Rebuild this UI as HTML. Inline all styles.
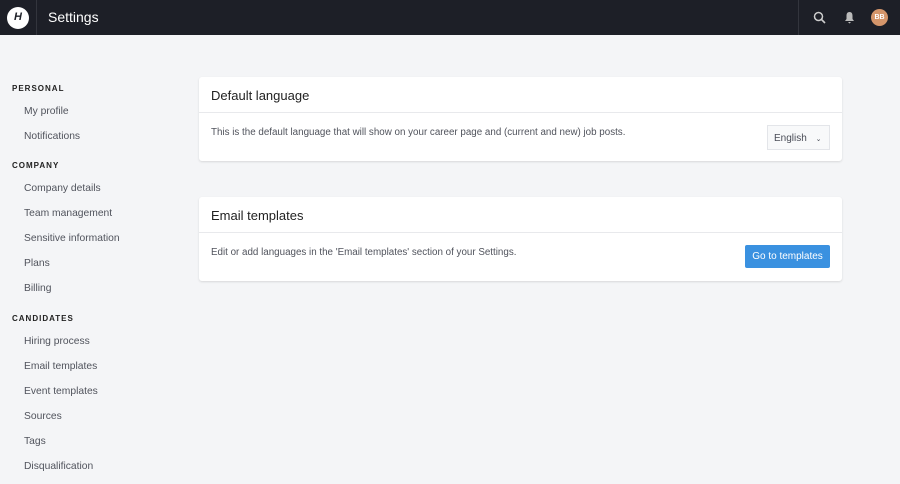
<!DOCTYPE html>
<html><head><style>
*{margin:0;padding:0;box-sizing:border-box}
body{width:900px;height:484px;background:#f4f5f7;font-family:"Liberation Sans",sans-serif;position:relative;overflow:hidden;color:#222}
.top{position:absolute;left:0;top:0;width:900px;height:35px;background:#1d1f27}
.logo{position:absolute;left:7px;top:7px;width:22px;height:22px;border-radius:50%;background:#fff;color:#1d1f27;font-weight:bold;font-style:italic;font-size:11px;text-align:center;line-height:20px}
.sep{position:absolute;top:0;width:1px;height:35px;background:#33353d}
.title{position:absolute;left:48px;top:9px;color:#fff;font-size:14px}
.av{position:absolute;left:871px;top:9px;width:17px;height:17px;border-radius:50%;background:#d4956a;color:#fff;font-size:7px;text-align:center;line-height:17px;font-weight:bold}
.h{position:absolute;left:12px;font-size:8px;font-weight:bold;letter-spacing:1px;color:#222}
.i{position:absolute;left:24px;font-size:10.3px;color:#50535c}
.card{position:absolute;left:199px;width:643px;background:#fff;border-radius:3px;box-shadow:0 1px 2px rgba(0,0,0,.12)}
.card h2{font-weight:normal;font-size:13px;padding:11px 12px 0;height:36px;border-bottom:1px solid #e8e9ec}
.card p{position:absolute;left:12px;font-size:9.8px;color:#50535c}
</style></head><body>
<div class="top">
<div class="logo">H</div>
<div class="sep" style="left:36px"></div>
<div class="title">Settings</div>
<div class="sep" style="left:798px"></div>
<svg style="position:absolute;left:813px;top:11px" width="13" height="13" viewBox="0 0 13 13"><circle cx="5.5" cy="5.5" r="4" fill="none" stroke="#ccc" stroke-width="1.5"/><path d="M8.5 8.5L12 12" stroke="#ccc" stroke-width="1.6"/></svg>
<svg style="position:absolute;left:844px;top:11px" width="11" height="13" viewBox="0 0 11 13"><path d="M5.5 1C3 1 2.5 3 2.5 5V8L1 10H10L8.5 8V5C8.5 3 8 1 5.5 1Z M4 11H7L5.5 12.5Z" fill="#bbb"/></svg>
<div class="av">BB</div>
</div>
<div class="h" style="top:84px">PERSONAL</div>
<div class="i" style="top:106px">My profile</div>
<div class="i" style="top:131px">Notifications</div>
<div class="h" style="top:161px">COMPANY</div>
<div class="i" style="top:183px">Company details</div>
<div class="i" style="top:208px">Team management</div>
<div class="i" style="top:233px">Sensitive information</div>
<div class="i" style="top:258px">Plans</div>
<div class="i" style="top:283px">Billing</div>
<div class="h" style="top:314px">CANDIDATES</div>
<div class="i" style="top:336px">Hiring process</div>
<div class="i" style="top:361px">Email templates</div>
<div class="i" style="top:386px">Event templates</div>
<div class="i" style="top:411px">Sources</div>
<div class="i" style="top:436px">Tags</div>
<div class="i" style="top:461px">Disqualification</div>
<div class="card" style="top:77px;height:84px"><h2>Default language</h2>
<p style="top:50px">This is the default language that will show on your career page and (current and new) job posts.</p>
<div style="position:absolute;left:568px;top:48px;width:63px;height:25px;border:1px solid #e3e5e9;background:#f8f9fa;font-size:10px;color:#4a4d57;padding:7px 6px">English <span style="font-size:7px;margin-left:6px">&#8964;</span></div>
</div>
<div class="card" style="top:197px;height:84px"><h2>Email templates</h2>
<p style="top:50px">Edit or add languages in the 'Email templates' section of your Settings.</p>
<div style="position:absolute;left:546px;top:48px;width:85px;height:23px;background:#3a91e0;color:#fff;font-size:10px;text-align:center;line-height:23px;border-radius:2px">Go to templates</div>
</div>
</body></html>
